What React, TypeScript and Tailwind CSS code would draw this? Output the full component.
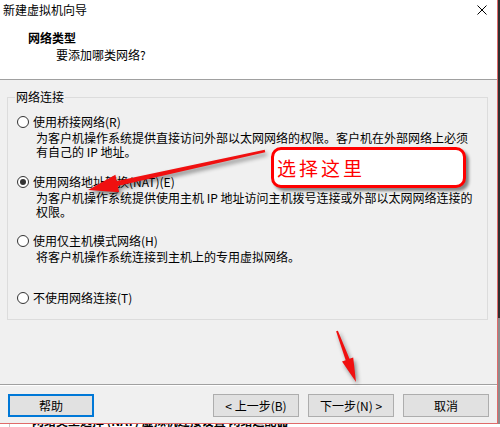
function Radio({ checked }: { checked?: boolean }) {
  return (
    <span className="w-[12px] h-[12px] rounded-full border border-[#333333] bg-white flex items-center justify-center shrink-0">
      {checked && <span className="w-[6px] h-[6px] rounded-full bg-[#333333]" />}
    </span>
  );
}

function Option({
  label,
  checked,
  lines,
}: {
  label: string;
  checked?: boolean;
  lines?: string[];
}) {
  return (
    <div className="flex flex-col">
      <div className="flex items-center h-[16px] gap-[4px]">
        <Radio checked={checked} />
        <span className="leading-[16px] whitespace-nowrap">{label}</span>
      </div>
      {lines && (
        <div className="flex flex-col ml-[19px] mt-[1px]">
          {lines.map((l) => (
            <span key={l} className="h-[14px] leading-[14px] whitespace-nowrap">
              {l}
            </span>
          ))}
        </div>
      )}
    </div>
  );
}

function Btn({ children, focused }: { children: React.ReactNode; focused?: boolean }) {
  return (
    <button
      className={
        focused
          ? "w-[86px] h-[23px] border-2 border-[#0078d7] bg-[#e1e1e1] flex items-center justify-center leading-none"
          : "w-[86px] h-[23px] border border-[#adadad] bg-[#e1e1e1] flex items-center justify-center leading-none"
      }
    >
      {children}
    </button>
  );
}

export default function App() {
  return (
    <div className="relative w-[500px] h-[427px] overflow-hidden flex flex-col text-[12px] text-black font-['Noto_Sans_CJK_SC','Microsoft_YaHei',sans-serif]">
      <div className="flex h-[424px]">
        {/* window */}
        <div className="w-[498px] h-[424px] flex flex-col border-r border-b border-[#e06a6a]">
          {/* header */}
          <div className="h-[80px] bg-white border-b border-[#a0a0a0] flex flex-col">
            <div className="flex items-center h-[18px] pt-[2px] pl-[3px] pr-[10px]">
              <span className="leading-[16px]">新建虚拟机向导</span>
              <svg className="ml-auto" width="10" height="10" viewBox="0 0 10 10">
                <path d="M0.5 0.5 L9.5 9.5 M9.5 0.5 L0.5 9.5" stroke="#000" strokeWidth="1" />
              </svg>
            </div>
            <span className="mt-[13px] pl-[28px] h-[14px] leading-[14px] font-bold">网络类型</span>
            <span className="mt-[3px] pl-[56px] h-[14px] leading-[14px]">要添加哪类网络?</span>
          </div>

          {/* body */}
          <div className="flex-1 bg-[#f0f0f0] px-[7px] pt-[17px]">
            <div className="relative w-[481px] h-[223px] border border-[#dcdcdc] pl-[9px] pt-[16px] flex flex-col">
              <span className="absolute -top-[8px] left-[7px] px-[1px] bg-[#f0f0f0] leading-[14px]">
                网络连接
              </span>
              <Option
                label="使用桥接网络(R)"
                lines={[
                  "为客户机操作系统提供直接访问外部以太网网络的权限。客户机在外部网络上必须",
                  "有自己的 IP 地址。",
                ]}
              />
              <div className="mt-[15px]">
                <Option
                  checked
                  label="使用网络地址转换(NAT)(E)"
                  lines={[
                    "为客户机操作系统提供使用主机 IP 地址访问主机拨号连接或外部以太网网络连接的",
                    "权限。",
                  ]}
                />
              </div>
              <div className="mt-[14px]">
                <Option
                  label="使用仅主机模式网络(H)"
                  lines={["将客户机操作系统连接到主机上的专用虚拟网络。"]}
                />
              </div>
              <div className="mt-[26px]">
                <Option label="不使用网络连接(T)" />
              </div>
            </div>
          </div>

          {/* footer */}
          <div className="h-px bg-[#a0a0a0]" />
          <div className="h-px bg-white" />
          <div className="h-[37px] bg-[#f0f0f0] flex items-start pt-[8px] pl-[8px] pr-[8px]">
            <Btn focused>帮助</Btn>
            <div className="ml-auto flex gap-[9px]">
              <Btn>&lt; 上一步(B)</Btn>
              <Btn>下一步(N) &gt;</Btn>
              <Btn>取消</Btn>
            </div>
          </div>
        </div>
        {/* desktop edge */}
        <div className="flex-1 flex flex-col">
          <div className="h-[318px] bg-[#2e2e2e]" />
          <div className="flex-1 bg-[#8c8c8c]" />
        </div>
      </div>

      {/* window behind, cut off */}
      <div className="h-[3px] bg-white overflow-hidden flex">
        <div className="w-[10px] border-r border-[#c8c8c8]" />
        <span className="pl-[22px] -mt-[10px] leading-[14px] font-bold whitespace-nowrap">
          网络类型选择 (NAT) 虚拟机连接设置 网络适配器
        </span>
      </div>

      {/* annotation callout */}
      <div className="absolute left-[271px] top-[147px] w-[195px] h-[41px] border-[3px] border-[#ff0000] rounded-[10px] bg-white shadow-[3px_3px_3px_rgba(0,0,0,0.45)] flex items-center pl-[3px]">
        <span className="text-[#ff0000] text-[19px] tracking-[3px] leading-none">选择这里</span>
      </div>

      {/* annotation arrows */}
      <svg
        className="absolute left-0 top-0 pointer-events-none drop-shadow-[2px_3px_2px_rgba(0,0,0,0.45)]"
        width="500"
        height="427"
        viewBox="0 0 500 427"
      >
        <polygon
          fill="#f01010"
          points="264.7,149.8 116.8,181.1 115.4,174.7 88,190 119.2,192.3 117.8,185.9 265.3,152.2"
        />
        <polygon
          fill="#f01010"
          points="337.9,330.7 349.5,358.8 353.2,357.4 356,382 342,361.6 345.7,360.2 336.1,331.3"
        />
      </svg>
    </div>
  );
}
